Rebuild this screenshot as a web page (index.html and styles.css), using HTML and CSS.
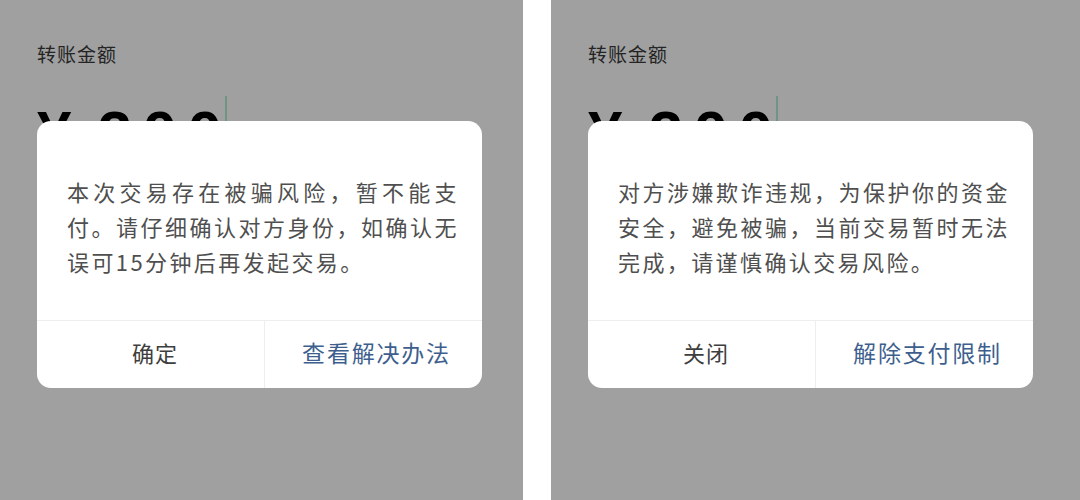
FILE: index.html
```html
<!DOCTYPE html>
<html lang="zh-CN">
<head>
  <meta charset="UTF-8">
  <title>转账</title>
  <link rel="stylesheet" href="styles.css">
</head>
<body>
  <div class="screens">
    <section class="phone">
      <div class="transfer">
        <p class="label">转账金额</p>
        <div class="amount">
          <span class="yen">¥</span><span class="digits">200</span><span class="caret"></span>
        </div>
      </div>
      <div class="mask"></div>
      <div class="dialog">
        <p class="dialog-text">本次交易存在被骗风险，暂不能支付。请仔细确认对方身份，如确认无误可15分钟后再发起交易。</p>
        <div class="dialog-actions">
          <button class="action">确定</button>
          <button class="action primary">查看解决办法</button>
        </div>
      </div>
    </section>

    <section class="phone">
      <div class="transfer">
        <p class="label">转账金额</p>
        <div class="amount">
          <span class="yen">¥</span><span class="digits">200</span><span class="caret"></span>
        </div>
      </div>
      <div class="mask"></div>
      <div class="dialog">
        <p class="dialog-text">对方涉嫌欺诈违规，为保护你的资金安全，避免被骗，当前交易暂时无法完成，请谨慎确认交易风险。</p>
        <div class="dialog-actions">
          <button class="action">关闭</button>
          <button class="action primary">解除支付限制</button>
        </div>
      </div>
    </section>
  </div>
</body>
</html>
```

FILE: styles.css
```css
body {
  margin: 0;
  background: #fff;
  font-family: "Noto Sans CJK SC", "Noto Sans", sans-serif;
}
.screens {
  display: grid;
  grid-template-columns: 523px 529px;
  column-gap: 28px;
  height: 500px;
}
.phone {
  position: relative;
  overflow: hidden;
  background: #fff;
}
.transfer {
  padding: 41px 0 0 37px;
}
.label {
  margin: 0;
  font-size: 19px;
  line-height: 26px;
  letter-spacing: 1px;
  color: #3a3a3a;
}
.amount {
  display: flex;
  align-items: flex-start;
  margin-top: 35px;
  font-family: "Liberation Sans", Arial, sans-serif;
  font-weight: bold;
  font-size: 62px;
  line-height: 1;
  color: #000;
}
.digits {
  margin-left: 26px;
  letter-spacing: 10.5px;
}
.caret {
  width: 2px;
  height: 60px;
  margin: -6px 0 0 -7px;
  background: #b4eed2;
}

/* dimmed backdrop under the alert */
.mask {
  position: absolute;
  inset: 0;
  background: rgba(0, 0, 0, 0.373);
}
.dialog {
  position: absolute;
  top: 121px;
  left: 37px;
  width: 445px;
  background: #fff;
  border-radius: 14px;
  overflow: hidden;
}
.dialog-text {
  margin: 0;
  padding: 53px 23px 41px 30px;
  font-size: 22px;
  line-height: 35px;
  letter-spacing: 2.4px;
  text-align: justify;
  color: #4f4f4f;
}
.dialog-actions {
  display: grid;
  grid-template-columns: 227px 1fr;
  border-top: 1px solid #eeeeee;
}
.action {
  height: 67px;
  padding: 0 0 6px 9px;
  border: none;
  background: none;
  font-family: inherit;
  font-size: 22px;
  letter-spacing: 1px;
  color: #3e3e3e;
}
.action + .action {
  border-left: 1px solid #eeeeee;
}
.action.primary {
  padding-left: 6px;
  font-size: 23px;
  letter-spacing: 1.8px;
  color: #3e5f8e;
}
```
